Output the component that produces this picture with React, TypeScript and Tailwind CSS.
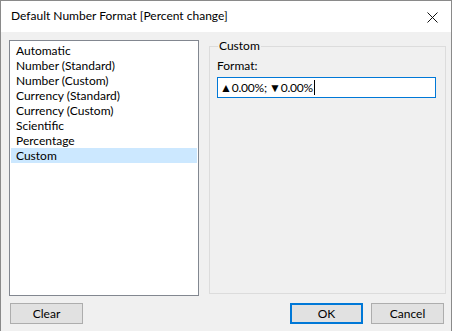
const formats = [
  "Automatic",
  "Number (Standard)",
  "Number (Custom)",
  "Currency (Standard)",
  "Currency (Custom)",
  "Scientific",
  "Percentage",
  "Custom",
];

export default function App() {
  const selected = "Custom";

  return (
    <div className="flex h-[331px] w-[454px] bg-white text-[12px] text-black" style={{ fontFamily: '"Segoe UI", Lato, "Noto Sans", sans-serif' }}>
      <div className="flex h-full w-[452px] flex-col border-x border-t border-[#8a8a8a]">
        {/* Title bar */}
        <div className="flex h-[31px] shrink-0 items-center justify-between bg-white pl-[10px] pr-[13px]">
          <span className="pb-[1px]">Default Number Format [Percent change]</span>
          <svg width="11" height="11" viewBox="0 0 11 11" className="mt-[1px]">
            <path d="M0.5 0.5 L10.5 10.5 M10.5 0.5 L0.5 10.5" stroke="#111" strokeWidth="1" fill="none" />
          </svg>
        </div>

        {/* Body */}
        <div className="flex flex-1 flex-col bg-[#f0f0f0] pl-[8px] pr-[5px] pt-[8px]">
          <div className="flex">
            <div className="h-[256px] w-[190px] border border-[#828790] bg-white p-[1px] pt-[2px]">
              {formats.map((f) => (
                <div
                  key={f}
                  className={`h-[15px] pl-[5px] leading-[15px] ${f === selected ? "bg-[#cce8ff]" : ""}`}
                >
                  {f}
                </div>
              ))}
            </div>

            <fieldset className="ml-[10px] mt-[-1px] h-[255px] w-[237px] border border-[#dcdcdc] px-[7px]">
              <legend className="ml-[1px] px-[1px] leading-[14px]">Custom</legend>
              <div className="mt-[5px] leading-[16px]">Format:</div>
              <div className="mt-[3px] flex h-[21px] w-[219px] items-center border border-[#0078d7] bg-white pl-[2px]">
                <span className="tracking-[-0.2px]">
                  <span className="text-[12px]">▲</span>0.00%;<span className="ml-[2px] text-[12px]">▼</span>0.00%
                </span>
                <span className="ml-[1px] h-[15px] w-[1px] bg-black" />
              </div>
            </fieldset>
          </div>

          {/* Buttons */}
          <div className="mt-[7px] flex pl-[1px]">
            <button className="h-[21px] w-[73px] border border-[#adadad] bg-[#e1e1e1] leading-none">Clear</button>
            <div className="flex-1" />
            <button className="h-[21px] w-[73px] border-2 border-[#0078d7] bg-[#e1e1e1] leading-none">OK</button>
            <button className="ml-[8px] mr-[2px] h-[21px] w-[73px] border border-[#adadad] bg-[#e1e1e1] leading-none">Cancel</button>
          </div>
        </div>
      </div>
    </div>
  );
}
